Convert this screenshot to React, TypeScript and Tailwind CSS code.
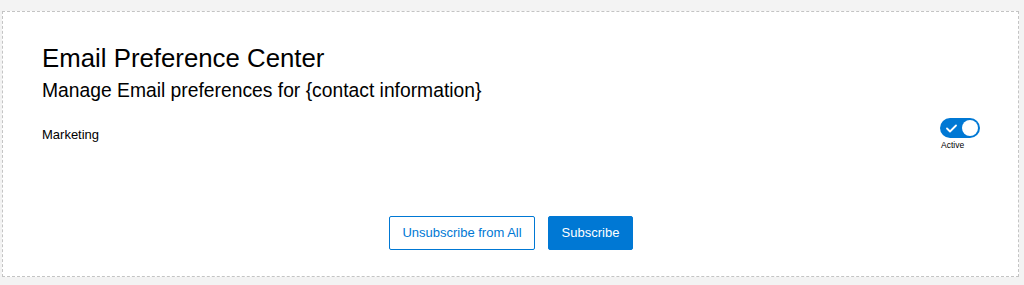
import React from "react";

export default function App() {
  return (
    <div className="h-[285px] w-[1024px] bg-[#f3f3f3] pt-[11px] pl-[2px]" style={{ fontFamily: '"Liberation Sans", Arial, sans-serif' }}>
      <div className="box-border flex h-[266px] w-[1017px] flex-col border border-dashed border-[#c4c4c4] bg-white pl-[39px] pr-[38px] pt-[31px]">
        <h1 className="text-[25.8px] leading-[30px] text-black">Email Preference Center</h1>
        <h2 className="mt-[7px] text-[19.3px] leading-[22px] text-black">Manage Email preferences for {"{contact information}"}</h2>
        <div className="mt-[16px] flex items-start justify-between">
          <div className="mt-[9px] text-[13px] leading-[15px] text-black">Marketing</div>
          <div className="flex flex-col items-start">
            <div className="flex h-[20px] w-[40px] items-center justify-between rounded-full bg-[#0078d4] pl-[6px] pr-[2px]">
              <svg width="11" height="9" viewBox="0 0 11 9" fill="none">
                <path d="M1 4.5 L4 7.5 L10 1.5" stroke="white" strokeWidth="1.8" strokeLinecap="round" strokeLinejoin="round" />
              </svg>
              <div className="h-[16px] w-[16px] rounded-full bg-white" />
            </div>
            <div className="mt-[2px] pl-[1px] text-[8.5px] leading-[10px] text-black">Active</div>
          </div>
        </div>
        <div className="mt-[66px] flex justify-center gap-[13px]">
          <button className="box-border flex h-[34px] w-[146px] items-center justify-center rounded-[2px] border border-[#0078d4] bg-white text-[13px] text-[#0078d4]">
            Unsubscribe from All
          </button>
          <button className="box-border flex h-[34px] w-[85px] items-center justify-center rounded-[2px] border border-[#0078d4] bg-[#0078d4] text-[13px] text-white">
            Subscribe
          </button>
        </div>
      </div>
    </div>
  );
}
